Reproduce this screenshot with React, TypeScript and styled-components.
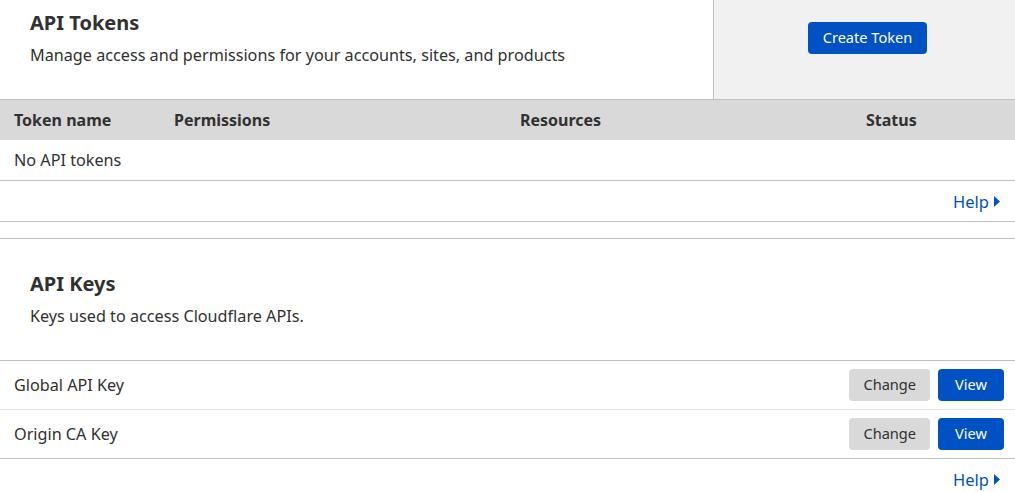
import React from 'react'
import styled, { createGlobalStyle } from 'styled-components'

const BLUE = '#0051c3'
const TEXT = '#313131'

const GlobalStyle = createGlobalStyle`
  html, body {
    margin: 0;
    padding: 0;
    background: #fff;
    font-family: "Noto Sans", "Open Sans", sans-serif;
    color: ${TEXT};
  }
  * { box-sizing: border-box; }
`

const Page = styled.div`
  width: 1015px;
  overflow: hidden;
`

const Card = styled.section<{ $gap?: boolean }>`
  border-bottom: 1px solid #bfbfbf;
  ${p => p.$gap && 'border-top: 1px solid #bfbfbf; margin-top: 16px;'}
`

const TopHeader = styled.div`
  display: flex;
  height: 100px;
  border-bottom: 1px solid #bfbfbf;
`

const HeaderMain = styled.div`
  flex: 0 0 714px;
  padding: 9px 30px 0;
  border-right: 1px solid #bfbfbf;
`

const HeaderAside = styled.div`
  flex: 1;
  background: #f1f1f1;
  display: flex;
  justify-content: center;
  padding: 22px 0 0 6px;
  align-items: flex-start;
`

const Title = styled.h2`
  margin: 0;
  font-size: 20px;
  font-weight: 700;
  line-height: 27px;
`

const Subtitle = styled.p`
  margin: 7px 0 0;
  font-size: 16.2px;
  line-height: 24px;
`

const KeysHeader = styled.div`
  height: 122px;
  padding: 31px 30px 0;
  border-bottom: 1px solid #bfbfbf;
`

const Button = styled.button<{ $variant: 'primary' | 'secondary'; $pad?: number }>`
  border: none;
  border-radius: 4px;
  height: 32px;
  padding: 0 ${p => p.$pad ?? 15}px 2px;
  font-family: inherit;
  font-size: 14.6px;
  line-height: 1;
  cursor: pointer;
  background: ${p => (p.$variant === 'primary' ? BLUE : '#d9d9d9')};
  color: ${p => (p.$variant === 'primary' ? '#fff' : TEXT)};
`

const TableHead = styled.div`
  display: grid;
  grid-template-columns: 160px 346px 346px 1fr;
  height: 40px;
  align-items: center;
  background: #d9d9d9;
  padding-left: 14px;
  font-weight: 700;
  font-size: 16px;
`

const Row = styled.div<{ $h: number; $last?: boolean }>`
  display: flex;
  align-items: center;
  justify-content: space-between;
  height: ${p => p.$h}px;
  padding: 0 11px 0 14px;
  font-size: 16.2px;
  border-bottom: 1px solid ${p => (p.$last ? '#bfbfbf' : '#e5e5e5')};
`

const Actions = styled.div`
  display: flex;
  gap: 8px;
`

const HelpBar = styled.div`
  display: flex;
  justify-content: flex-end;
  height: 40px;
  align-items: center;
  padding-right: 15px;
`

const HelpLink = styled.a`
  color: ${BLUE};
  font-size: 16.5px;
  text-decoration: none;
  display: flex;
  align-items: center;
  gap: 5px;
`

const Help = () => (
  <HelpBar>
    <HelpLink href="#">
      Help
      <svg width="6" height="11" viewBox="0 0 6 11">
        <path d="M0 0 L6 5.5 L0 11 Z" fill={BLUE} />
      </svg>
    </HelpLink>
  </HelpBar>
)

const keys = ['Global API Key', 'Origin CA Key']

export default function App() {
  return (
    <Page>
      <GlobalStyle />
      <Card>
        <TopHeader>
          <HeaderMain>
            <Title>API Tokens</Title>
            <Subtitle>Manage access and permissions for your accounts, sites, and products</Subtitle>
          </HeaderMain>
          <HeaderAside>
            <Button $variant="primary">Create Token</Button>
          </HeaderAside>
        </TopHeader>
        <TableHead>
          <span>Token name</span>
          <span>Permissions</span>
          <span>Resources</span>
          <span>Status</span>
        </TableHead>
        <Row $h={41} $last>No API tokens</Row>
        <Help />
      </Card>
      <Card $gap>
        <KeysHeader>
          <Title>API Keys</Title>
          <Subtitle>Keys used to access Cloudflare APIs.</Subtitle>
        </KeysHeader>
        {keys.map((k, i) => (
          <Row key={k} $h={49} $last={i === keys.length - 1}>
            <span>{k}</span>
            <Actions>
              <Button $variant="secondary" $pad={14}>Change</Button>
              <Button $variant="primary" $pad={17}>View</Button>
            </Actions>
          </Row>
        ))}
        <Help />
      </Card>
    </Page>
  )
}
